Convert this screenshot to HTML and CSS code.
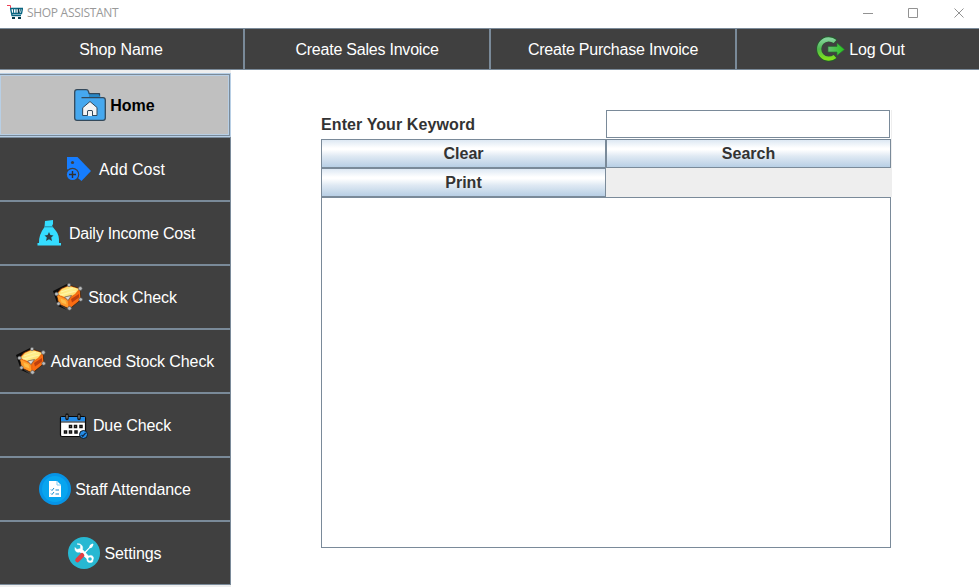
FILE: index.html
```html
<!DOCTYPE html>
<html lang="en">
<head>
<meta charset="utf-8">
<title>Shop Assistant</title>
<link rel="stylesheet" href="styles.css">
</head>
<body>
<svg class="defs" width="0" height="0" aria-hidden="true">
  <defs>
    <linearGradient id="green" x1="0" y1="0" x2="0" y2="1"><stop offset="0" stop-color="#83d39a"/><stop offset=".5" stop-color="#4fb84f"/><stop offset="1" stop-color="#7fe01d"/></linearGradient>
    <linearGradient id="arrow" x1="0" y1="0" x2="1" y2="0"><stop offset="0" stop-color="#68bd75"/><stop offset="1" stop-color="#28c51c"/></linearGradient>
    <linearGradient id="lid" x1="0" y1="0" x2="1" y2="1"><stop offset="0" stop-color="#ffc74d"/><stop offset=".5" stop-color="#fff08c"/><stop offset="1" stop-color="#ffc04a"/></linearGradient>
    <symbol id="box" viewBox="0 0 31 31">
      <path d="M0 9L15 1.500L18 4L5 12L8 24L14 28L5 24z" fill="#0b0b0b"/>
      <path d="M3.500 11.500L8 6.500L16 3L27 6.500L28 17.500L16.500 27L5.500 22z" fill="#ef6b10" stroke="#33200f" stroke-width=".7"/>
      <path d="M4.500 12L9 7L16 4L26 7L22 12L14.700 16.500z" fill="url(#lid)"/>
      <path d="M8 10L20 6M7 13L23 9" stroke="#fff4a8" stroke-width="1.200"/>
      <path d="M4 13L14.500 18L15.500 26L6.500 21.500z" fill="#ff9c2b"/>
      <path d="M7.500 16.500L12.500 18.500L13.500 22.500L8.500 20.500z" fill="#ffbd4a"/>
      <path d="M16.500 17.500L27 9L27 17.500L17 25.500z" fill="#fb6c12"/>
      <path d="M18 17L26 12V15.500L19 20.500z" fill="#bd400e"/>
      <path d="M11.500 15l7-1.500-3.500 5z" fill="#d9d9d9" stroke="#665444" stroke-width=".7"/>
      <g fill="#b9bcbd" stroke="#555" stroke-width=".6"><circle cx="3.500" cy="12" r="1.800"/><circle cx="16" cy="3" r="1.700"/><circle cx="27.300" cy="6.500" r="1.900"/><circle cx="27.700" cy="17.500" r="1.800"/><circle cx="16.500" cy="26.300" r="1.900"/><circle cx="5.500" cy="21.700" r="1.700"/></g>
    </symbol>
  </defs>
</svg>
<div class="window">
  <header class="titlebar">
    <svg class="cart" width="16" height="15" viewBox="0 0 16 15"><path d="M0 .500H3.500V3" fill="none" stroke="#ef4056"/><path d="M3.500 3L5 10.500H14M3.500 3.500H15.500L14.500 8.500H4.500" fill="none" stroke="#076581" stroke-width="1.300"/><path d="M6.500 3.500V8M9 3.500V8M14 3.500L12.500 8" stroke="#1b6f88" stroke-width="1"/><path d="M11.500 3.500V8" stroke="#123b49" stroke-width="1.400"/><path d="M5 12h3v2H5zM11 12h3v2h-3z" fill="#073a49"/></svg>
    <span class="title">SHOP ASSISTANT</span>
    <svg class="controls" width="104" height="14" viewBox="0 0 104 14" fill="none" stroke="#929292"><path d="M0 7.500H10M45.500 2.500H54.500V11.500H45.500zM91.500 2.500L100.500 11.500M100.500 2.500L91.500 11.500"/></svg>
  </header>
  <nav class="menu">
    <button class="dark"><span class="tight">Shop Name</span></button>
    <button class="dark"><span class="tighter">Create Sales Invoice</span></button>
    <button class="dark"><span class="tighter">Create Purchase Invoice</span></button>
    <button class="dark">
      <svg width="32" height="32" viewBox="0 0 32 32"><path d="M22.500 8.500A10 10 0 1 0 22.500 23.500" fill="none" stroke="#245d2c" stroke-width="5.400"/><path d="M22 8.500A9.700 9.700 0 1 0 22 23.500" fill="none" stroke="url(#green)" stroke-width="4.200"/><path d="M15 13.500H24V10L31.500 16.500L24 22.500V19H15z" fill="url(#arrow)" stroke="#287532" stroke-width=".7"/></svg>
      <span class="tighter">Log Out</span></button>
  </nav>
  <div class="body">
    <aside class="side">
      <button class="home">
        <svg width="32" height="32" viewBox="0 0 32 32" stroke="#34495b" stroke-linejoin="round" stroke-linecap="round"><path d="M.700 3Q.700.700 3 .700H12Q14 .700 14.500 2.500L15.200 5H25Q26.500 5 26.500 8.500H29Q31.300 8.500 31.300 11V29Q31.300 31.300 29 31.300H3Q.700 31.300.700 29z" fill="#46a8ef" stroke="none"/><path d="M15 5H26V8.500H15z" fill="#2788c8" stroke="none"/><path d="M8 8.700H29Q31.300 8.700 31.300 11V29Q31.300 31.300 29 31.300H3Q.700 31.300.700 29V3Q.700.700 3 .700H12Q14 .700 14.500 2.500L15.200 4.700H25.500V6" fill="none" stroke-width="1.300"/><path d="M9 18.500L16 12.500L23 18.500V26.500H18.500V22.500Q18.500 21.500 17 21.500H15Q13.500 21.500 13.500 22.500V26.500H9z" fill="#f4f4f4" stroke-width="1"/><path d="M14 22h4v5h-4z" fill="#f4f4f4" stroke="none"/><path d="M13.500 24V22.500Q13.500 21.500 15 21.500H17Q18.500 21.500 18.500 22.500V26.500" fill="none" stroke-width="1"/></svg>
        <span>Home</span></button>
      <button class="dark">
        <svg width="30" height="30" viewBox="0 0 30 30"><path d="M2 3H12.500L26 17L16.500 27L2 15z" fill="#167dff"/><circle cx="7.500" cy="8.500" r="1.600" fill="#404040"/><circle cx="7.500" cy="20.500" r="6.800" fill="#404040"/><circle cx="7.500" cy="20.500" r="5.600" fill="#167dff"/><path d="M4 20.500h7M7.500 17v7" stroke="#303030" stroke-width="1.400"/></svg>
        <span>Add Cost</span></button>
      <button class="dark">
        <svg width="30" height="30" viewBox="0 0 30 30"><path d="M10 3L18 2V6L17 8L21 13Q24.500 17 24 25H26V27.500H2.500V25H4Q3.500 17 9.500 9z" fill="#35ddff"/><path d="M9.500 8.800H18" stroke="#2688a0"/><path d="M14 14L15.400 17.100L18.500 17.400L16.200 19.600L17 23L14 21.200L11 23L11.800 19.600L9.500 17.400L12.600 17.100z" fill="#303d44"/></svg>
        <span class="tighter">Daily Income Cost</span></button>
      <button class="dark"><svg width="31" height="31"><use href="#box"/></svg><span class="tight">Stock Check</span></button>
      <button class="dark"><svg width="31" height="31"><use href="#box"/></svg><span class="tight">Advanced Stock Check</span></button>
      <button class="dark">
        <svg width="30" height="30" viewBox="0 0 30 30"><rect x="1.500" y="6.500" width="25" height="20" rx="1.500" fill="#fff" stroke="#080808" stroke-width="1.200"/><path d="M2 7H26V11.500H2z" fill="#258de9"/><path d="M2 12H26" stroke="#111"/><path d="M8 5V8.500M20 5V8.500" stroke="#151515" stroke-width="3.500" stroke-linecap="round"/><path d="M8 5V8.500M20 5V8.500" stroke="#707070" stroke-width="1.400"/><g fill="#fff" stroke="#111" stroke-width="1.500"><path d="M10.500 15.500h2v2h-2zM15.500 15.500h2v2h-2zM21 15.500h2v2h-2zM5.500 21h2v2h-2zM10.500 21h2v2h-2zM16 21h2v2h-2z"/></g><circle cx="24.500" cy="24.500" r="4" fill="#258de9" stroke="#101820"/><path d="M22.500 25l1.300 1.200 2.900-3.300" fill="none" stroke="#112b48" stroke-width="1.300"/></svg>
        <span class="tight">Due Check</span></button>
      <button class="dark">
        <svg width="32" height="32" viewBox="0 0 32 32"><circle cx="16" cy="16" r="16" fill="#0794e6"/><circle cx="16" cy="16" r="13" fill="#08a5ef"/><path d="M10 8H18L22 12V24H10z" fill="#fff"/><path d="M18 8v4h4" fill="none" stroke="#7bcaf2"/><path d="M12 16.500l1 1 2-2.500M12 20.500l1 1 2-2.500M16.500 17H20M16.500 21H20" fill="none" stroke="#168bcc"/></svg>
        <span class="tight">Staff Attendance</span></button>
      <button class="dark">
        <svg width="32" height="32" viewBox="0 0 32 32"><circle cx="16" cy="16" r="16" fill="#27b8d2"/><path d="M9 7L12.500 8L12.500 11.500L9 12.500L7 10.500C6.500 14.500 9 16 12 15L19 22C18.500 25 21 26.500 24.500 25L25.500 21C25 18 22.500 18 20.500 19L14.500 12.500C15.500 9 12.500 6 9 7" fill="#fff" stroke="#fff" stroke-width=".5"/><circle cx="22" cy="22" r="1.800" fill="#27b8d2"/><path d="M15.500 16L21 10.500L22 8L24.500 6.500L25.500 7.500L24 10.500L21.500 11.500L16.500 17" fill="#fff"/><path d="M9.500 23L14 18.300" stroke="#e43d42" stroke-width="4.600" stroke-linecap="round"/></svg>
        <span class="tight">Settings</span></button>
    </aside>
    <main class="content">
      <div class="form">
        <label for="keyword">Enter Your Keyword</label>
        <div class="field"><input id="keyword" type="text"></div>
        <button class="metal">Clear</button>
        <button class="metal">Search</button>
        <button class="metal">Print</button>
      </div>
      <div class="results"></div>
    </main>
  </div>
</div>
</body>
</html>
```
FILE: styles.css
```css
* { box-sizing: border-box; }
body { margin: 0; overflow: hidden; font: 16px "Liberation Sans", Arial, sans-serif; background: #fff; }
.defs { position: absolute; }
.window { width: 979px; height: 587px; overflow: hidden; display: flex; flex-direction: column; }
.titlebar { flex: 0 0 28px; height: 28px; display: flex; align-items: center; padding: 0 15px 3px 7px; }
.cart { margin-right: 4px; }
.title { font: 12px "Open Sans", "Noto Sans", sans-serif; letter-spacing: -0.3px; color: #999; white-space: nowrap; }
.controls { margin-left: auto; margin-right: -3px; }
button { font: inherit; margin: 0; padding: 0; border-radius: 0; display: flex; align-items: center; justify-content: center; gap: 4px; white-space: nowrap; }
button svg { flex: none; }
button span { padding-top: 2px; }
.tight { letter-spacing: -0.1px; }
.tighter { letter-spacing: -0.22px; }
.dark { background: #404040; color: #fff; border: 1px solid #7a8a99; }
.menu { flex: 0 0 42px; display: grid; grid-template-columns: 246px 246px 246px 246px; margin-left: -2px; }
.body { flex: 1; display: flex; min-height: 0; }
.side { width: 231px; padding-top: 3px; background: #eee; display: grid; grid-template-rows: repeat(8, 64px); }
.side .dark { border-left: 0; }
.home { margin-left: -2px; background: #c0c0c0; color: #000; font-weight: bold; border: 1px solid #b8cfe5; box-shadow: inset 0 0 0 1px #7a8a99, inset 0 0 0 2px #b8cfe5; }
.content { flex: 1; padding: 40px 87px 0 90px; }
.form { width: 571px; height: 87px; display: grid; grid-template-columns: 285px 285px; grid-template-rows: repeat(3, 29px); background: #eee; }
.form label { background: #fff; font-weight: bold; line-height: 29px; color: #333; letter-spacing: 0.1px; }
.field { background: #fff; padding: 0 1px 1px 0; }
.field input { display: block; width: 284px; height: 28px; border: 1px solid #7a8a99; border-radius: 0; background: #fff; font: inherit; outline: none; }
.metal { font-weight: bold; color: #333; border: 1px solid #7a8a99; background: linear-gradient(#dde8f3 0%, #fff 30%, #fff 36%, #dfe9f3 60%, #b8cfe5 100%); }
.results { width: 570px; height: 351px; border: 1px solid #7a8a99; background: #fff; }
```
